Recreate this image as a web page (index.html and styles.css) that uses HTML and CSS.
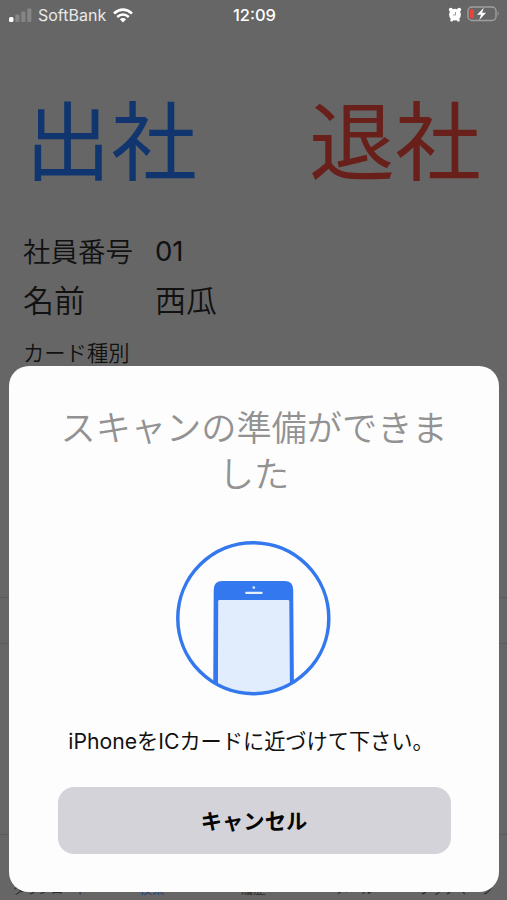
FILE: index.html
```html
<!DOCTYPE html>
<html lang="ja">
<head>
<meta charset="utf-8">
<meta name="viewport" content="width=device-width, initial-scale=1">
<title>スキャン</title>
<link rel="stylesheet" href="styles.css">
</head>
<body>
<div class="screen">
  <header class="status">
    <div class="carrier">
      <svg class="signal" width="24" height="16" viewBox="0 0 24 16"><rect x="0" y="10" width="4.5" height="5" rx="1.5" fill="#fff"/><g fill="#858585"><rect x="6.3" y="7.5" width="4.2" height="7.5" rx="1"/><rect x="12.2" y="4.5" width="4.2" height="10.5" rx="1"/><rect x="18.2" y="1.5" width="4.2" height="13.5" rx="1"/></g></svg>
      <span>SoftBank</span>
      <svg class="wifi" width="20" height="15" viewBox="0 0 20 15"><g fill="none" stroke="#fff" stroke-width="2.6"><path d="M1 5.4Q10-2.3 19 5.4"/><path d="M4.2 9Q10 4 15.8 9"/></g><path d="M6.9 11.3Q10 8.7 13.1 11.3L10 14.5Z" fill="#fff"/></svg>
    </div>
    <time class="clock">12:09</time>
    <div class="power">
      <svg width="14" height="15" viewBox="0 0 14 15"><g fill="#fff"><circle cx="7" cy="7.7" r="5.9"/><circle cx="2.8" cy="2.8" r="2"/><circle cx="11.2" cy="2.8" r="2"/><path d="M2.200 14.300l.8-4 3 2.300-1.600 1.900zM11.800 14.300l-.8-4-3 2.300 1.600 1.900z"/></g><path d="M7.500 5V8H5.200" fill="none" stroke="#999" stroke-width="1"/></svg>
      <svg width="33" height="16" viewBox="0 0 33 16"><rect x="1" y="1" width="28" height="13.5" rx="4" fill="none" stroke="#a0a0a0" stroke-width="1.4"/><path d="M30.7 5.3q2 2.4 0 4.8z" fill="#a0a0a0"/><rect x="3" y="3" width="4" height="9.5" rx="1.5" fill="#e8423a"/><path d="M16.8 1.8L10 8.7h4L12.2 14l6.9-7.3h-4z" fill="#fff"/></svg>
    </div>
  </header>
  <main class="page">
    <div class="actions"><span class="come">出社</span><span class="leave">退社</span></div>
    <dl class="details">
      <div class="row number"><dt>社員番号</dt><dd>01</dd></div>
      <div class="row name"><dt>名前</dt><dd>西瓜</dd></div>
      <div class="row card"><dt>カード種別</dt></div>
    </dl>
    <div class="list"></div>
  </main>
  <nav class="tabs"><span>ダウンロード</span><span class="active">検索</span><span>履歴</span><span>メール</span><span>ブックマーク</span></nav>
  <section class="sheet" role="dialog">
    <h1>スキャンの準備ができま<br>した</h1>
    <svg class="phone" width="156" height="156" viewBox="0 0 156 156">
      <defs><clipPath id="ring"><circle cx="78" cy="78" r="76"/></clipPath></defs>
      <g clip-path="url(#ring)">
        <path d="M37.700 50q0-9 8.500-9h62.500q8.500 0 8.500 9L118 156H37.200z" fill="#3478f0"/>
        <path d="M43.500 60h68.500q1.300 0 1.300 1.300L114 156H41.900L42.200 61.300q0-1.300 1.300-1.300z" fill="#e1edfc"/>
        <circle cx="77.800" cy="47.600" r="1.400" fill="#cfe1ff"/><rect x="69.200" y="51.700" width="17.500" height="2.200" rx="1" fill="#e3eeff"/>
      </g>
      <circle cx="77.300" cy="78.200" r="75.500" fill="none" stroke="#3478ee" stroke-width="3.500"/>
    </svg>
    <p>iPhoneをICカードに近づけて下さい。</p>
    <button type="button">キャンセル</button>
  </section>
</div>
</body>
</html>
```
FILE: styles.css
```css
* { box-sizing: border-box; }
body { margin: 0; background: #666; font-family: Inter, "Noto Sans CJK JP", sans-serif; color: #111; }
.screen { position: relative; width: 507px; height: 900px; overflow: hidden; display: flex; flex-direction: column; background: #666; }
.status { height: 30px; display: grid; grid-template-columns: 1fr 60px 1fr; align-items: center; padding: 0 7px 0 9px; color: #f4f4f4; font-size: 16px; }
.carrier { display: flex; align-items: center; color: #e9e9e9; }
.signal { margin-right: 5px; }
.wifi { margin-left: 7px; }
.clock { text-align: center; font-weight: 500; color: #fff; font-size: 16.500px; }
.power { display: flex; justify-content: flex-end; align-items: center; gap: 5px; margin-top: -2px; }
.page { flex: 1; display: flex; flex-direction: column; }
.actions { display: flex; justify-content: space-between; padding: 0 26px 0 25px; margin-top: 44px; height: 126px; font-size: 86px; line-height: 126px; font-weight: 400; font-family: "Noto Sans CJK JP", sans-serif; }
.come { color: #11366f; }
.leave { color: #69201b; }
.details { margin: 25px 0 0; padding-left: 23px; }
.row { display: flex; align-items: center; font-weight: 350; }
.row dt { width: 132px; }
.row dd { margin: 0; }
.number { height: 50px; font-size: 27.500px; }
.number dd { font-weight: 400; padding-top: 2px; }
.name { height: 46px; font-size: 31px; }
.card { height: 60px; font-size: 21.300px; }
.list { margin-top: 216px; height: 47px; border: solid #5a5a5a; border-width: 1px 0; }
.tabs { height: 66px; border-top: 1px solid #5a5a5a; display: grid; grid-template-columns: repeat(5, 1fr); align-items: end; padding: 0 0 1px; text-align: center; font-size: 12.500px; line-height: 18px; color: #292929; white-space: nowrap; }
.active { color: #12397c; }
.sheet { position: absolute; left: 9px; top: 366px; width: 490px; height: 526px; border-radius: 20px; background: #fdfdfd; display: flex; flex-direction: column; align-items: center; }
h1 { margin: 39px 0 0; font-weight: 350; font-size: 35.200px; line-height: 46px; text-align: center; color: #929292; white-space: nowrap; }
.phone { flex: none; margin: 43px 0 0; }
.sheet p { margin: 29px 0 0; font-size: 21.200px; line-height: 32px; font-weight: 400; color: #111; white-space: nowrap; padding-right: 6px; }
button { width: 393px; height: 67px; margin-top: 30px; border: 0; border-radius: 16px; background: #d4d3da; color: #050505; font: 700 21.300px/67px Inter, "Noto Sans CJK JP", sans-serif; }
```
